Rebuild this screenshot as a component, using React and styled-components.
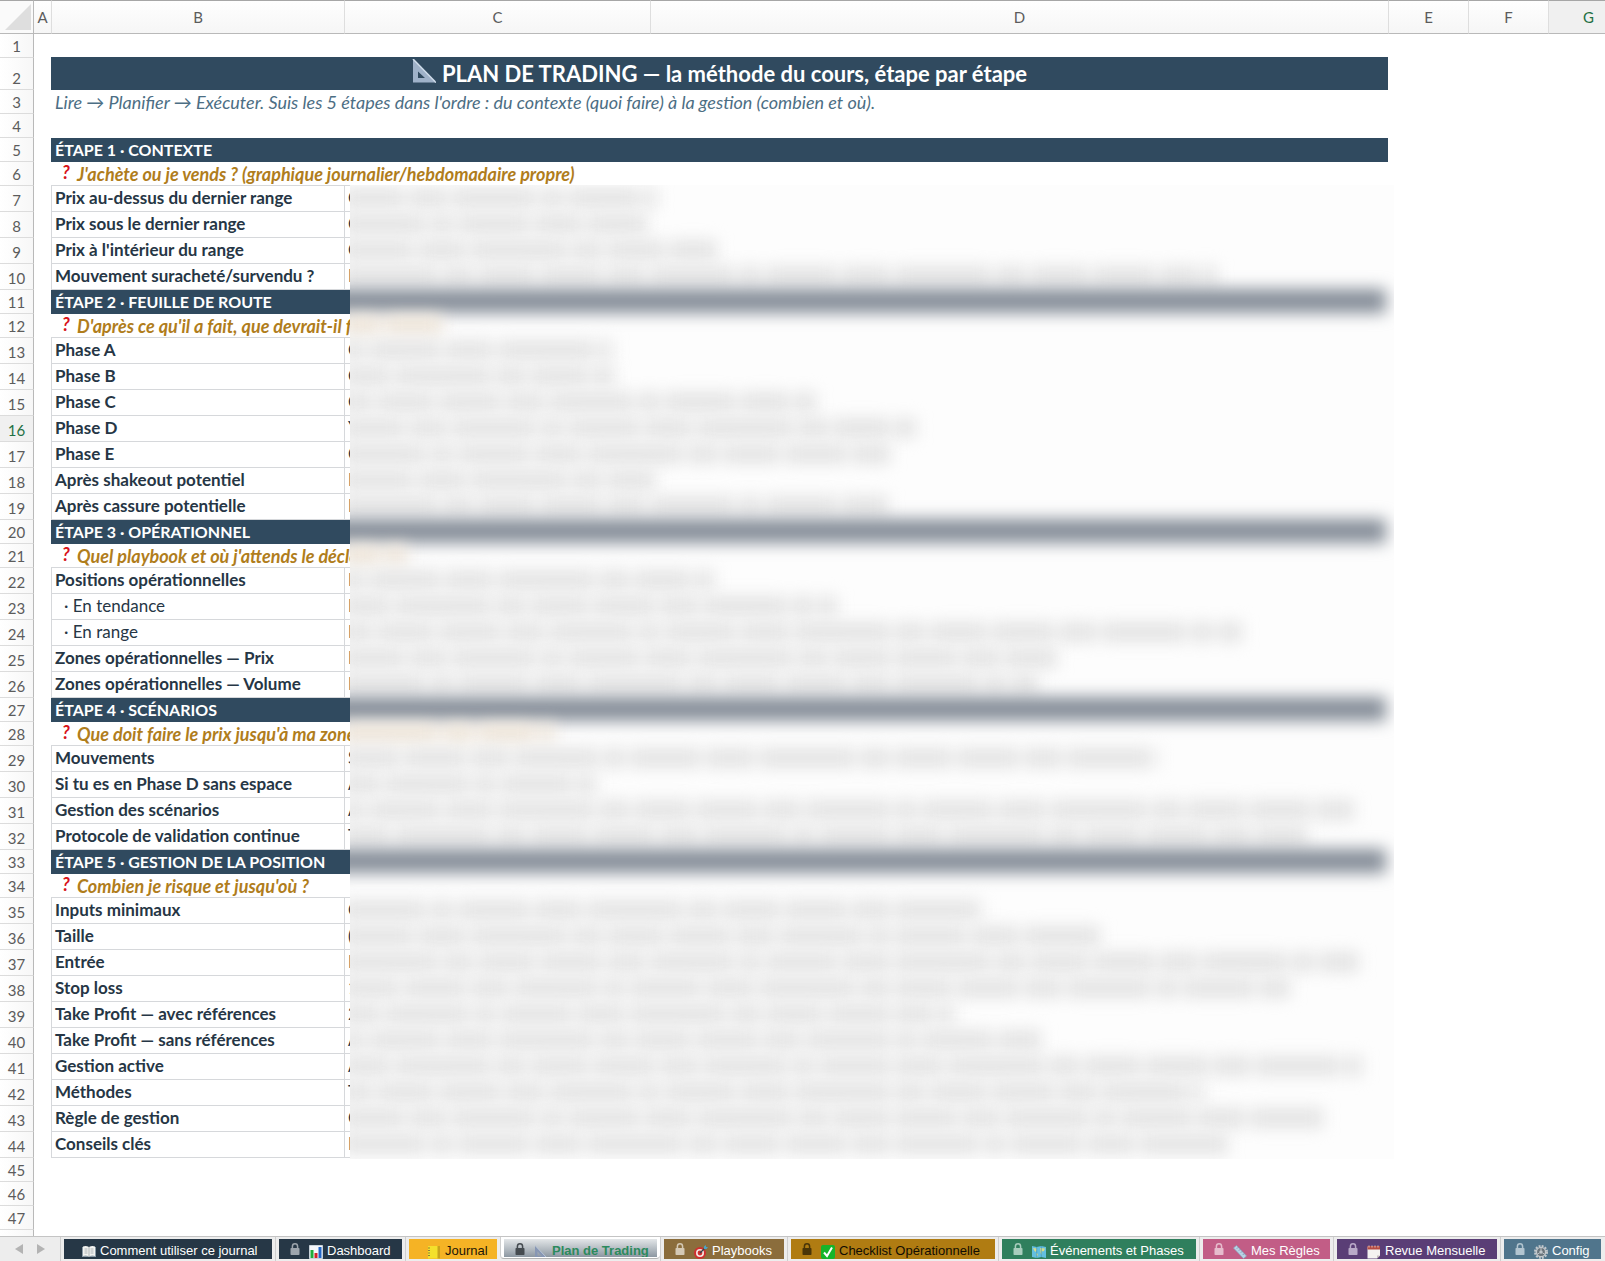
import React from "react";
import styled, { createGlobalStyle, css } from "styled-components";

const NAVY = "#304a5f";
const INK = "#263645";
const LINE = "#d6d8db";

const GlobalStyle = createGlobalStyle`
  *, *::before, *::after { box-sizing: border-box; }
  body { margin: 0; background: #fff; font-family: Lato, "Open Sans", sans-serif; }
`;

const Shell = styled.div`
  display: flex;
  flex-direction: column;
  height: 100vh;
  overflow: hidden;
`;

const Sheet = styled.main`
  position: relative;
  flex: 1;
  min-height: 0;
  overflow: hidden;
`;

const Grid = styled.table`
  table-layout: fixed;
  width: 1628px;
  border-collapse: separate;
  border-spacing: 0;
  td, th { padding: 0; font-weight: 400; white-space: nowrap; }
`;

const Col = styled.col`
  width: ${(p) => p.$w}px;
`;

const headFont = css`
  font-size: 15px;
  color: ${(p) => (p.$active ? "#1f7044" : "#5c5c5c")};
`;

const ColHead = styled.th`
  ${headFont}
  height: 34px;
  line-height: 22px;
  border-top: 1px solid #a6a6a6;
  border-bottom: 1px solid #b9b9b9;
  border-left: ${(p) => (p.$first ? 0 : 1)}px solid #dedede;
  background: ${(p) => (p.$active ? "#f0f0f0" : "linear-gradient(#fefefe, #f6f6f6)")};
`;

const Corner = styled.th`
  height: 34px;
  border-top: 1px solid #a6a6a6;
  border-bottom: 1px solid #b9b9b9;
  border-right: 1px solid #b9b9b9;
  background: #fafafa;
  svg { display: block; margin: 0 0 0 5px; }
`;

const RowHead = styled.th`
  ${headFont}
  height: ${(p) => p.$h}px;
  line-height: 22px;
  vertical-align: bottom;
  border-right: 1px solid #b9b9b9;
  border-bottom: 1px solid #dcdcdc;
  background: ${(p) => (p.$active ? "#f0f0f0" : "linear-gradient(90deg, #fff, #f7f7f7)")};
`;

const TitleCell = styled.td`
  background: ${NAVY};
  box-shadow: 0 -1px 0 ${NAVY};
  color: #fff;
`;

const Title = styled.h1`
  display: flex;
  align-items: center;
  justify-content: center;
  gap: 6px;
  margin: 0;
  font-size: 22px;
  line-height: 30px;
  font-weight: 700;
  svg { align-self: flex-start; }
`;

const IntroCell = styled.td`
  && { padding-left: 4px; }
  font-size: 18px;
  line-height: 20px;
  font-style: italic;
  color: #4c6e84;
`;

const SectionCell = styled.td`
  && { padding-left: 4px; font-weight: 700; }
  background: ${NAVY};
  color: #fff;
  font-size: 16px;
  line-height: 20px;
`;

const QuestionCell = styled.td`
  && { padding-left: 11px; font-weight: 700; }
  border-bottom: 1px solid ${LINE};
  font-size: 18px;
  line-height: 20px;
  font-style: italic;
  color: #b07d1c;
`;

const Mark = styled.span`
  display: inline-block;
  width: 15px;
  line-height: 16px;
  vertical-align: top;
  color: #d8141c;
`;

const LabelCell = styled.td`
  && {
    padding-left: ${(p) => (p.$sub ? 12 : 3)}px;
    padding-bottom: 2px;
    font-weight: ${(p) => (p.$sub ? 400 : 700)};
  }
  border-left: 1px solid ${LINE};
  border-bottom: 1px solid ${LINE};
  font-size: 17px;
  line-height: 20px;
  color: ${INK};
`;

const DataCell = styled.td`
  && { padding-left: 3px; padding-bottom: 2px; }
  border-left: 1px solid ${LINE};
  border-bottom: 1px solid ${LINE};
  font-size: 17px;
  line-height: 20px;
  color: ${INK};
`;

const Veil = styled.div`
  position: absolute;
  top: 185px;
  left: 350px;
  width: 1044px;
  padding-bottom: 2px;
  overflow: hidden;
  background: #fdfdfd;
`;

const VeilRow = styled.div`
  display: flex;
  align-items: center;
  height: ${(p) => p.$h}px;
`;

const Band = styled.div`
  flex: none;
  width: 1060px;
  height: 24px;
  margin-left: -24px;
  background: #858d98;
  filter: blur(8px);
`;

const Smudge = styled.div`
  display: flex;
  flex: none;
  gap: 5px;
  height: 20px;
  margin-left: -8px;
  filter: blur(8px);
`;

const Word = styled.i`
  flex: none;
  background: ${(p) => p.$c};
`;

const TabBar = styled.nav`
  display: flex;
  flex: none;
  height: 25px;
  border-top: 1px solid #c4c4c4;
  background: #ededed;
  overflow: hidden;
`;

const Arrows = styled.div`
  display: flex;
  flex: none;
  align-items: center;
  justify-content: center;
  gap: 14px;
  width: 60px;
`;

const ArrowButton = styled.button`
  display: flex;
  padding: 0;
  border: 0;
  background: none;
`;

const TabSlot = styled.div`
  flex: none;
  height: 24px;
  padding: 2px 3px 0;
  border-left: 1px solid #cfcfcf;
  ${(p) => p.$active && css`
    height: 22px;
    background: #fff;
    border-bottom: 1px solid #b4b4b4;
    border-radius: 0 0 4px 4px;
    box-shadow: 0 -1px 0 #fff;
  `}
`;

const Tab = styled.button`
  display: flex;
  align-items: flex-start;
  width: ${(p) => p.$w}px;
  height: ${(p) => (p.$active ? 18 : 20)}px;
  padding: 4px 0 0 ${(p) => (p.$locked ? 11 : 18)}px;
  border: 0;
  overflow: hidden;
  background: ${(p) => p.$bg};
  color: ${(p) => p.$fg};
  font: ${(p) => (p.$active ? 700 : 400)} 13px/16px "Liberation Sans", Arial, sans-serif;
  white-space: nowrap;
  > svg { flex: none; }
`;

const TabIcon = styled.svg`
  width: 14px;
  height: 14px;
  margin: 2px 4px 0 ${(p) => (p.$locked ? 9 : 0)}px;
`;

const Lock = ({ color }) => (
  <svg width="10" height="12" viewBox="0 0 10 12" aria-hidden="true">
    <path d="M2.4 6V3.4a2.6 2.6 0 0 1 5.2 0V6" fill="none" stroke={color} strokeWidth="1.5" />
    <rect x="0.5" y="5" width="9" height="7" rx="0.8" fill={color} />
  </svg>
);

const icons = {
  book: (
    <>
      <path d="M0 2h14v10H0z" fill="#8b9aa5" />
      <path d="M1 1.5Q4 .5 7 2Q10 .5 13 1.5V11Q10 10 7 11.5Q4 10 1 11Z" fill="#f3f3f0" />
      <path d="M7 2v9.5M2.5 4h3M2.5 6h3M2.5 8h3M8.5 4h3M8.5 6h3M8.5 8h3" stroke="#9aa1a6" strokeWidth=".8" />
    </>
  ),
  chart: (
    <>
      <path d="M.5.5h13v13H.5z" fill="#f4f7fa" stroke="#c8d2da" />
      <path d="M1.5 5h3v8h-3z" fill="#1fae3a" />
      <path d="M5.5 8h3v5h-3z" fill="#d3232b" />
      <path d="M9.5 2h3v11h-3z" fill="#2266c8" />
    </>
  ),
  ledger: (
    <>
      <path d="M1 1h11.5v12.5H1z" fill="#f4e02c" />
      <path d="M10.5 1h2.5v12.5h-2.5z" fill="#c9a31c" />
      <path d="M1 3h2M1 5.500h2M1 8h2M1 10.500h2" stroke="#8d8038" strokeWidth="1" />
    </>
  ),
  square: (
    <>
      <path d="M1 .5V13.500H13.500ZM3.500 6.500L8 11.200H3.500Z" fill="#8797b4" fillRule="evenodd" />
      <path d="M1 .5L13.500 13.500" stroke="#c4cfe0" strokeWidth=".8" />
    </>
  ),
  dart: (
    <>
      <circle cx="6" cy="8" r="6" fill="#cf2f2f" />
      <circle cx="6" cy="8" r="4" fill="#f3e6e2" />
      <circle cx="6" cy="8" r="2.400" fill="#cf2f2f" />
      <path d="M6 8L11 3" stroke="#34434e" strokeWidth="1.200" />
      <path d="M10 4V1.500L12 0V2H14L12.500 4Z" fill="#4ba3c7" />
    </>
  ),
  check: (
    <>
      <rect width="14" height="14" rx="2" fill="#15b52a" />
      <path d="M3 7.500L6 11L11 2.500" fill="none" stroke="#fff" strokeWidth="2" />
    </>
  ),
  map: (
    <>
      <path d="M0 1L4.700 2L9.300 1L14 2V13L9.300 12L4.700 13L0 12Z" fill="#63bfe0" />
      <path d="M1 3L5 3.500L4 7L2.500 6ZM4 8L6 9L5 12ZM8 3L13 3.500L12 6L9.500 6.500L10 10L8.500 8Z" fill="#d8dc8a" />
      <path d="M4.700 2V13M9.300 1V12" stroke="#3d8fb4" strokeWidth=".6" />
    </>
  ),
  ruler: (
    <>
      <path d="M.5 3L3.500 .5L13.500 11L10.500 13.500Z" fill="#b9d3e6" stroke="#87a7c0" strokeWidth=".7" />
      <path d="M5 2.500L4 3.500M7 4.500L6 5.500M9 6.500L8 7.500M11 8.700L10 9.700" stroke="#5a7488" strokeWidth=".8" />
    </>
  ),
  calendar: (
    <>
      <path d="M.5 1.500h12.500v9l-3 3H.500z" fill="#f4f2f0" />
      <path d="M.5 1h12.500v3.500H.500z" fill="#b64b43" />
      <path d="M10 13.500v-3h3z" fill="#c4beb9" />
      <path d="M2 .500v2M5 .500v2M8 .500v2M11 .500v2" stroke="#efe7e2" strokeWidth=".8" />
    </>
  ),
  gear: (
    <>
      <circle cx="7" cy="7" r="6" fill="none" stroke="#c3c8cc" strokeWidth="2" strokeDasharray="1.900 1.240" />
      <circle cx="7" cy="7" r="4.600" fill="#6a747b" stroke="#c3c8cc" strokeWidth="1.400" />
      <circle cx="7" cy="7" r="1.700" fill="#c3c8cc" />
      <path d="M7 2.500V5.500M3.200 9.300L5.600 7.900M10.800 9.300L8.400 7.900" stroke="#c3c8cc" strokeWidth="1" />
    </>
  ),
};

const tabs = [
  { label: "Comment utiliser ce journal", icon: "book", w: 208, bg: "#263746", fg: "#fff" },
  { label: "Dashboard", icon: "chart", w: 123, bg: "#263746", fg: "#fff", lock: "#9da5ad" },
  { label: "Journal", icon: "ledger", w: 88, bg: "#f5b325", fg: "#1c1608" },
  { label: "Plan de Trading", icon: "square", w: 153, bg: "linear-gradient(#e3e6e8, #8d98a2)", fg: "#2c8a5d", lock: "#454b50", active: true },
  { label: "Playbooks", icon: "dart", w: 120, bg: "#8b6d3c", fg: "#fff", lock: "#d5c9b5" },
  { label: "Checklist Opérationnelle", icon: "check", w: 204, bg: "#b07c12", fg: "#110c02", lock: "#4a3508" },
  { label: "Événements et Phases", icon: "map", w: 194, bg: "#2f7f5d", fg: "#fff", lock: "#a8cdbd" },
  { label: "Mes Règles", icon: "ruler", w: 127, bg: "#c25d86", fg: "#fff", lock: "#e6bccd" },
  { label: "Revue Mensuelle", icon: "calendar", w: 160, bg: "#5a3e76", fg: "#fff", lock: "#b9aac8" },
  { label: "Config", icon: "gear", w: 97, bg: "#50758c", fg: "#fff", lock: "#b3c5d0" },
];

const blank = { type: "blank" };
const section = (text) => ({ type: "section", text });
const question = (text, end) => ({ type: "question", text, end });
const item = (text, start, end, sub) => ({ type: "item", text, start, end, sub });

const rows = [
  blank,
  { type: "title", text: "PLAN DE TRADING — la méthode du cours, étape par étape" },
  { type: "intro", text: "Lire → Planifier → Exécuter. Suis les 5 étapes dans l'ordre : du contexte (quoi faire) à la gestion (combien et où)." },
  blank,
  section("ÉTAPE 1 · CONTEXTE"),
  question("J'achète ou je vends ? (graphique journalier/hebdomadaire propre)", 0),
  item("Prix au-dessus du dernier range", "C", 315),
  item("Prix sous le dernier range", "C", 305),
  item("Prix à l'intérieur du range", "C", 375),
  item("Mouvement suracheté/survendu ?", "L", 875),
  section("ÉTAPE 2 · FEUILLE DE ROUTE"),
  question("D'après ce qu'il a fait, que devrait-il f", 100),
  item("Phase A", "C", 270),
  item("Phase B", "C", 272),
  item("Phase C", "C", 474),
  item("Phase D", "Y", 574),
  item("Phase E", "C", 550),
  item("Après shakeout potentiel", "L", 313),
  item("Après cassure potentielle", "L", 546),
  section("ÉTAPE 3 · OPÉRATIONNEL"),
  question("Quel playbook et où j'attends le décle", 65),
  item("Positions opérationnelles", "L", 372),
  item("· En tendance", "P", 495, true),
  item("· En range", "P", 900, true),
  item("Zones opérationnelles — Prix", "P", 715),
  item("Zones opérationnelles — Volume", "P", 696),
  section("ÉTAPE 4 · SCÉNARIOS"),
  question("Que doit faire le prix jusqu'à ma zone", 212),
  item("Mouvements", "S", 817),
  item("Si tu es en Phase D sans espace", "A", 254),
  item("Gestion des scénarios", "A", 1012),
  item("Protocole de validation continue", "T", 965),
  section("ÉTAPE 5 · GESTION DE LA POSITION"),
  question("Combien je risque et jusqu'où ?", 0),
  item("Inputs minimaux", "C", 643),
  item("Taille", "(", 758),
  item("Entrée", "L", 1017),
  item("Stop loss", "1", 948),
  item("Take Profit — avec références", "2", 612),
  item("Take Profit — sans références", "A", 699),
  item("Gestion active", "A", 1020),
  item("Méthodes", "T", 861),
  item("Règle de gestion", "C", 981),
  item("Conseils clés", "L", 886),
  blank,
  blank,
  blank,
];

const heightOf = (row) => (row.type === "title" ? 32 : row.type === "item" ? 26 : 24);

const STEPS = [62, 38, 84, 22, 71, 48, 96, 30, 57];

function wordWidths(total, seed) {
  const out = [];
  let left = total;
  let i = seed;
  while (left > 0) {
    const w = Math.min(STEPS[i % STEPS.length], left);
    out.push(w);
    left -= w + 5;
    i += 1;
  }
  return out;
}

function Cells({ row }) {
  switch (row.type) {
    case "title":
      return (
        <TitleCell colSpan={3}>
          <Title>
            <svg width="24" height="24" viewBox="0 0 24 24" aria-hidden="true">
              <path d="M1 0V23.500H24ZM6 12.500L13 19H6Z" fill="#9fb2c9" fillRule="evenodd" />
              <path d="M1 0L24 23.500" stroke="#cfdcea" strokeWidth="1.500" />
            </svg>
            <span>{row.text}</span>
          </Title>
        </TitleCell>
      );
    case "intro":
      return <IntroCell colSpan={3}>{row.text}</IntroCell>;
    case "section":
      return <SectionCell colSpan={3}>{row.text}</SectionCell>;
    case "question":
      return (
        <QuestionCell colSpan={3}>
          <Mark>?</Mark>
          {row.text}
        </QuestionCell>
      );
    case "item":
      return (
        <>
          <LabelCell $sub={row.sub}>{row.text}</LabelCell>
          <DataCell colSpan={2}>{row.start}</DataCell>
        </>
      );
    default:
      return <td colSpan={3} />;
  }
}

export default function App() {
  return (
    <Shell>
      <GlobalStyle />
      <Sheet>
        <Grid>
          <colgroup>
            {[34, 17, 293, 306, 738, 80, 80, 80].map((w, i) => (
              <Col key={i} $w={w} />
            ))}
          </colgroup>
          <thead>
            <tr>
              <Corner>
                <svg width="26" height="26" viewBox="0 0 26 26" aria-hidden="true">
                  <path d="M26 0V26H0Z" fill="#dedede" />
                </svg>
              </Corner>
              {["A", "B", "C", "D", "E", "F", "G"].map((c) => (
                <ColHead key={c} scope="col" $first={c === "A"} $active={c === "G"}>
                  {c}
                </ColHead>
              ))}
            </tr>
          </thead>
          <tbody>
            {rows.map((row, i) => (
              <tr key={i}>
                <RowHead scope="row" $h={heightOf(row)} $active={i === 15}>
                  {i + 1}
                </RowHead>
                <td />
                <Cells row={row} />
                <td />
                <td />
                <td />
              </tr>
            ))}
            <tr>
              <RowHead $h={24} />
            </tr>
          </tbody>
        </Grid>
        <Veil aria-hidden="true">
          {rows.slice(6, 44).map((row, i) => (
            <VeilRow key={i} $h={heightOf(row)}>
              {row.type === "section" && <Band />}
              {row.end > 0 && (
                <Smudge>
                  {wordWidths(row.end, i * 2).map((w, k) => (
                    <Word key={k} $c={row.type === "question" ? "#efe6da" : "#e4e4e4"} style={{ width: w }} />
                  ))}
                </Smudge>
              )}
            </VeilRow>
          ))}
        </Veil>
      </Sheet>
      <TabBar>
        <Arrows>
          <ArrowButton aria-label="Feuille précédente">
            <svg width="8" height="12" viewBox="0 0 8 12"><path d="M8 1V11L0 6Z" fill="#b3b3b3" /></svg>
          </ArrowButton>
          <ArrowButton aria-label="Feuille suivante">
            <svg width="8" height="12" viewBox="0 0 8 12"><path d="M0 1V11L8 6Z" fill="#b3b3b3" /></svg>
          </ArrowButton>
        </Arrows>
        {tabs.map((t) => (
          <TabSlot key={t.label} $active={t.active}>
            <Tab $w={t.w} $bg={t.bg} $fg={t.fg} $active={t.active} $locked={Boolean(t.lock)}>
              {t.lock && <Lock color={t.lock} />}
              <TabIcon viewBox="0 0 14 14" aria-hidden="true" $locked={Boolean(t.lock)}>
                {icons[t.icon]}
              </TabIcon>
              <span>{t.label}</span>
            </Tab>
          </TabSlot>
        ))}
      </TabBar>
    </Shell>
  );
}
